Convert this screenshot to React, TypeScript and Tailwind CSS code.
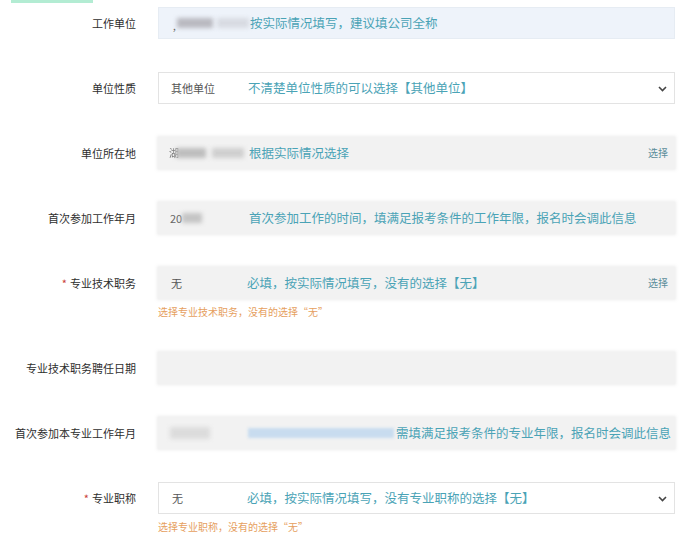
import React from "react";

const font = { fontFamily: '"Noto Sans CJK SC", "Noto Sans", sans-serif' };

function Label({ text, req }: { text: string; req?: boolean }) {
  return (
    <div className="w-[136px] shrink-0 text-right text-[11px] text-[#2e2e2e] leading-none">
      {req && <span className="text-[#c9403a] mr-[3px]">*</span>}
      {text}
    </div>
  );
}

function Chevron() {
  return (
    <svg width="9" height="6" viewBox="0 0 9 6" className="absolute right-[7px] top-[13px]">
      <path d="M1 1 L4.5 4.5 L8 1" fill="none" stroke="#444" strokeWidth="1.6" />
    </svg>
  );
}

function Hint({ text, left = 90 }: { text: string; left?: number }) {
  return (
    <span
      className="absolute top-1/2 -translate-y-1/2 text-[12.5px] text-[#4aa3b6] whitespace-nowrap leading-none"
      style={{ left }}
    >
      {text}
    </span>
  );
}

function Pick() {
  return (
    <span className="absolute right-[7px] top-1/2 -translate-y-1/2 text-[10px] text-[#5c8d9a] leading-none">
      选择
    </span>
  );
}

function Row({
  label,
  req,
  box,
  helper,
}: {
  label: string;
  req?: boolean;
  box: React.ReactNode;
  helper?: string;
}) {
  return (
    <div className="flex flex-col">
      <div className="flex items-center">
        <Label text={label} req={req} />
        <div className="ml-[22px]">{box}</div>
      </div>
      {helper && (
        <div className="ml-[158px] mt-[8px] text-[10px] text-[#e6a060] leading-none h-[12px]">
          {helper}
        </div>
      )}
    </div>
  );
}

const grayBox =
  "relative w-[517px] h-[32px] bg-[#f2f2f2] shadow-[0_0_3px_1px_rgba(235,235,235,0.9)]";

export default function App() {
  return (
    <div className="w-[681px] h-[553px] bg-white overflow-hidden" style={font}>
      <div className="ml-[11px] w-[82px] h-[3px] bg-[#b3ecd3]" />
      <div className="flex flex-col gap-[33px] pt-[4px]">
        <Row
          label="工作单位"
          box={
            <div className="relative w-[517px] h-[32px] bg-[#eef3fa] border border-[#e6ecf3]">
              <span className="absolute left-[14px] top-[10px] text-[10px] text-[#666]">,</span>
              <div className="absolute left-[18px] top-[10px] w-[36px] h-[10px] bg-[#b9b9c0] blur-[2px]" />
              <div className="absolute left-[58px] top-[10px] w-[32px] h-[10px] bg-[#d8dbe2] blur-[2px]" />
              <Hint text="按实际情况填写，建议填公司全称" left={91} />
            </div>
          }
        />
        <Row
          label="单位性质"
          box={
            <div className="relative w-[517px] h-[32px] bg-white border border-[#e3e3e3]">
              <span className="absolute left-[12px] top-1/2 -translate-y-1/2 text-[11px] text-[#555] leading-none">
                其他单位
              </span>
              <Hint text="不清楚单位性质的可以选择【其他单位】" left={89} />
              <Chevron />
            </div>
          }
        />
        <Row
          label="单位所在地"
          box={
            <div className={grayBox}>
              <span className="absolute left-[11px] top-1/2 -translate-y-1/2 text-[10px] text-[#777] leading-none blur-[0.5px]">
                湖
              </span>
              <div className="absolute left-[18px] top-[11px] w-[30px] h-[10px] bg-[#bdbdbd] blur-[2px]" />
              <div className="absolute left-[54px] top-[11px] w-[32px] h-[10px] bg-[#cfcfcf] blur-[2px]" />
              <Hint text="根据实际情况选择" left={91} />
              <Pick />
            </div>
          }
        />
        <Row
          label="首次参加工作年月"
          box={
            <div className={grayBox}>
              <span className="absolute left-[12px] top-1/2 -translate-y-1/2 text-[11px] text-[#666] leading-none">
                20
              </span>
              <div className="absolute left-[24px] top-[11px] w-[20px] h-[10px] bg-[#c4c4c4] blur-[2px]" />
              <Hint text="首次参加工作的时间，填满足报考条件的工作年限，报名时会调此信息" left={91} />
            </div>
          }
        />
        <Row
          label="专业技术职务"
          req
          helper="选择专业技术职务，没有的选择“无”"
          box={
            <div className={grayBox}>
              <span className="absolute left-[13px] top-1/2 -translate-y-1/2 text-[11px] text-[#555] leading-none">
                无
              </span>
              <Hint text="必填，按实际情况填写，没有的选择【无】" left={89} />
              <Pick />
            </div>
          }
        />
        <Row label="专业技术职务聘任日期" box={<div className={grayBox} />} />
        <Row
          label="首次参加本专业工作年月"
          box={
            <div className={grayBox}>
              <div className="absolute left-[12px] top-[10px] w-[40px] h-[12px] bg-[#dcdcdc] blur-[2px]" />
              <div className="absolute left-[90px] top-[11px] w-[146px] h-[10px] bg-[#c8dcef] blur-[1.5px]" />
              <Hint text="需填满足报考条件的专业年限，报名时会调此信息" left={238} />
            </div>
          }
        />
        <Row
          label="专业职称"
          req
          helper="选择专业职称，没有的选择“无”"
          box={
            <div className="relative w-[517px] h-[32px] bg-white border border-[#e3e3e3]">
              <span className="absolute left-[13px] top-1/2 -translate-y-1/2 text-[11px] text-[#555] leading-none">
                无
              </span>
              <Hint text="必填，按实际情况填写，没有专业职称的选择【无】" left={88} />
              <Chevron />
            </div>
          }
        />
      </div>
    </div>
  );
}
